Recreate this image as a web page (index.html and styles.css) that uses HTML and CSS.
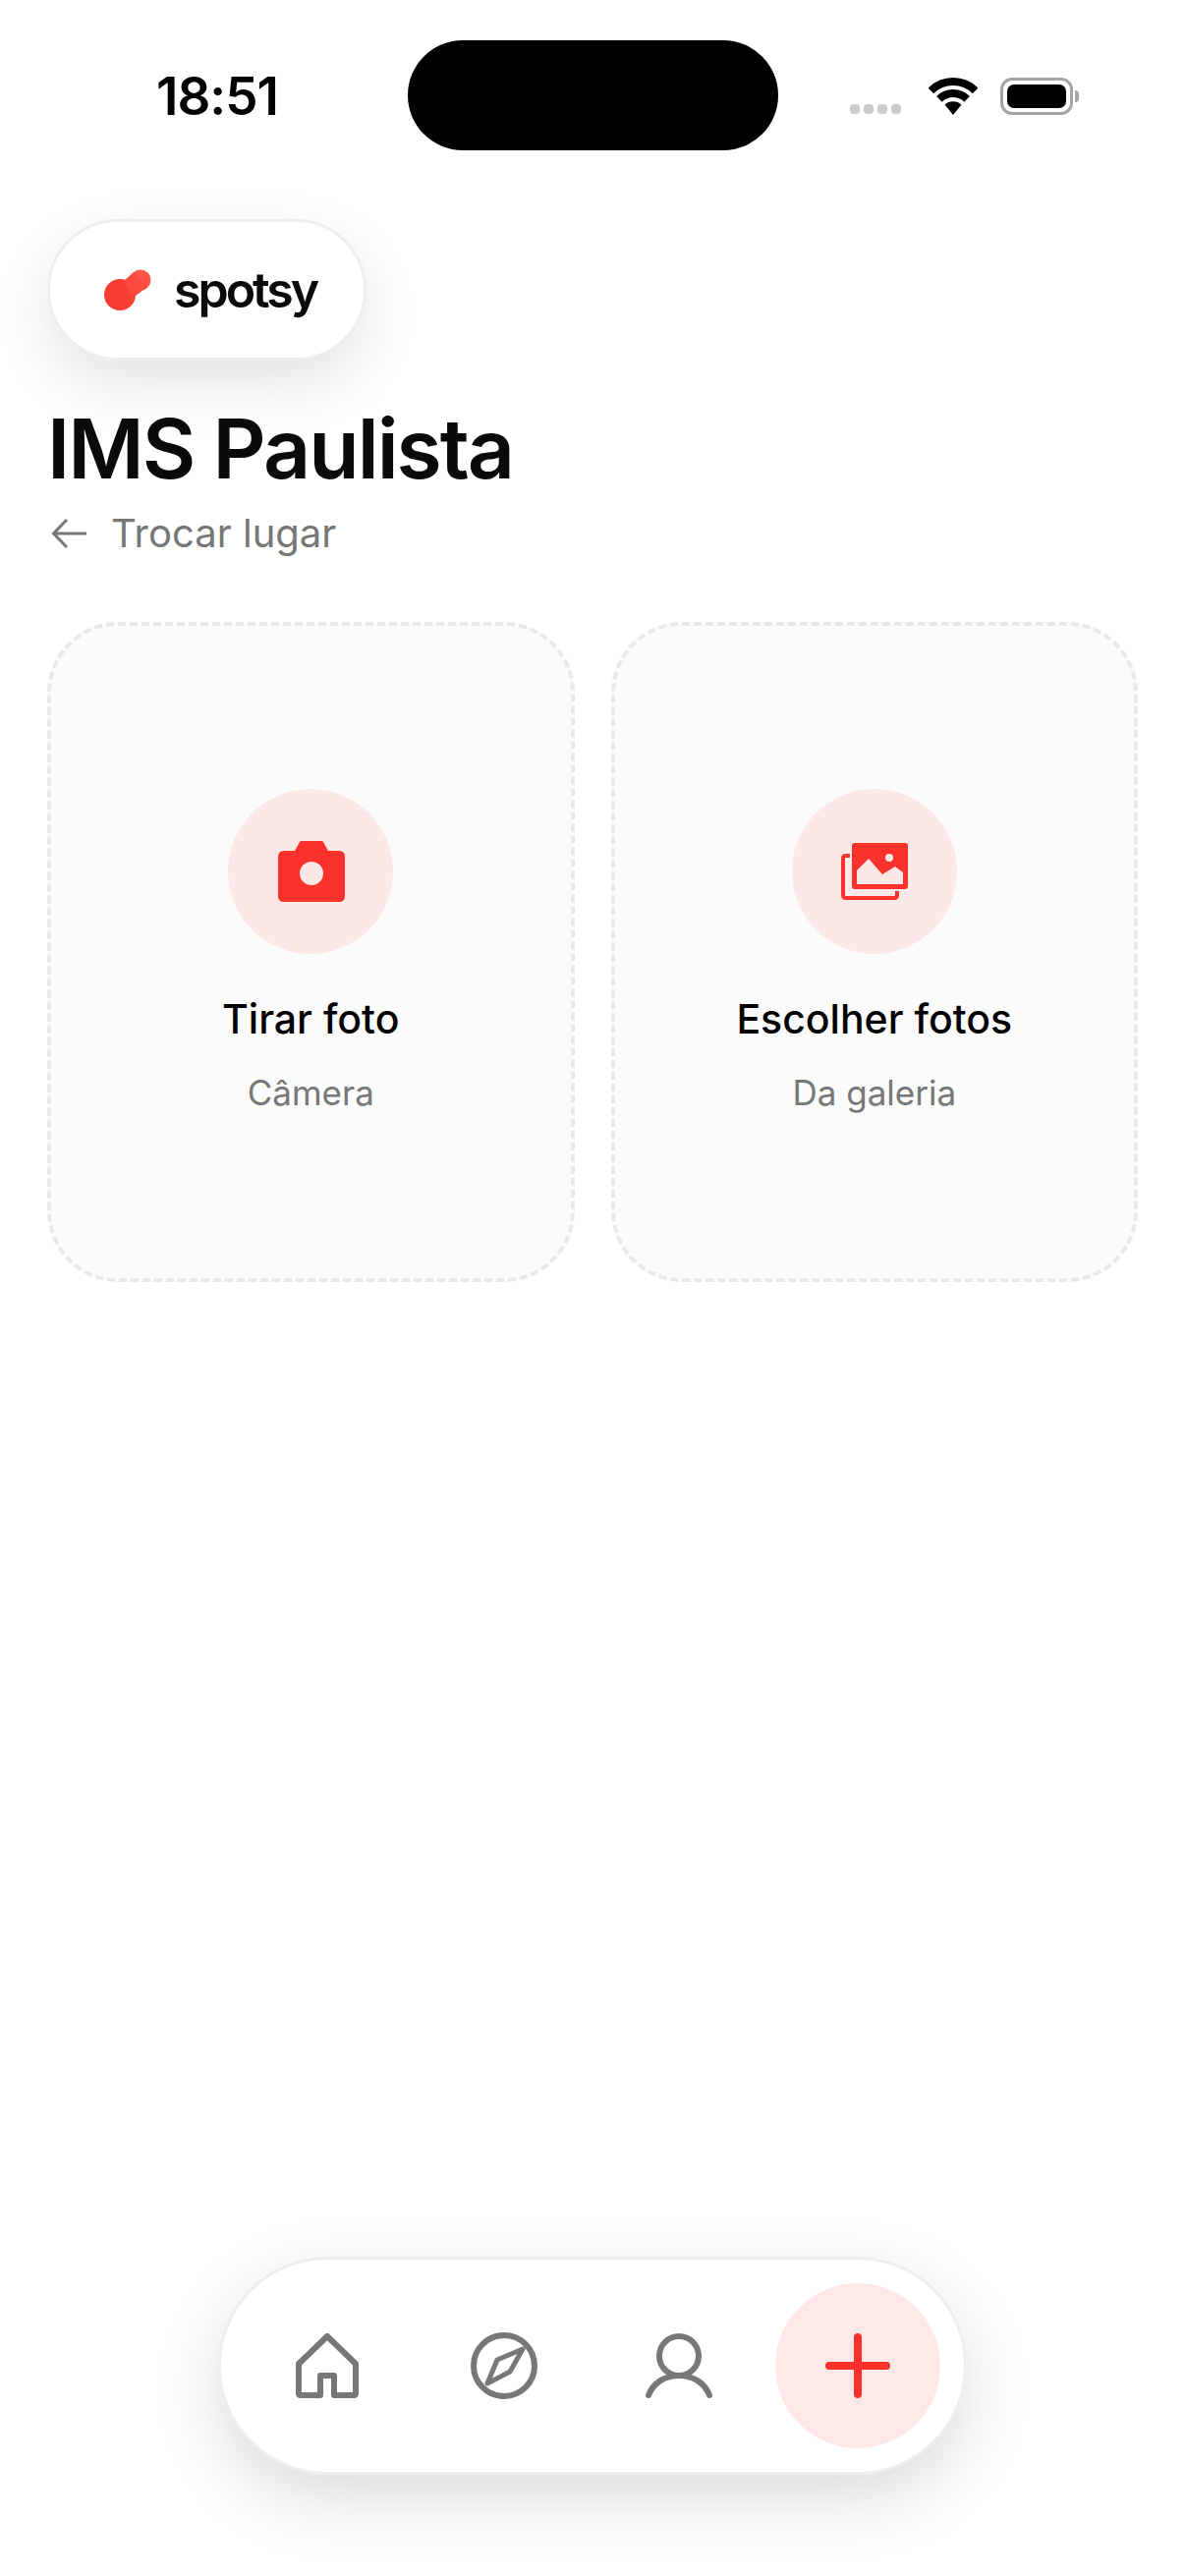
FILE: index.html
```html
<!DOCTYPE html>
<html lang="pt-BR">
<head>
    <meta charset="utf-8">
    <title>Spotsy</title>
    <link rel="stylesheet" href="styles.css">
</head>
<body>
    <div class="statusbar">
        <div class="time">18:51</div>
        <div class="island"></div>
        <div class="status-icons">
            <div class="signal"><i></i><i></i><i></i><i></i></div>
            <svg class="wifi" width="50" height="38" viewBox="0 0 50 38">
                <path d="M2.4 13.4A32 32 0 0 1 47.6 13.4" fill="none" stroke="#000" stroke-width="8"/>
                <path d="M10.9 21.9A20 20 0 0 1 39.1 21.9" fill="none" stroke="#000" stroke-width="8"/>
                <path d="M25 38L16.5 27.5A13 13 0 0 1 33.5 27.5Z" fill="#000"/>
            </svg>
            <div class="battery"><div class="battery-fill"></div></div>
            <div class="battery-nub"></div>
        </div>
    </div>

    <div class="main">
        <div class="logo-pill">
            <svg width="48" height="42" viewBox="0 0 48 42">
                <circle cx="16" cy="26" r="16" fill="#fa3c30"/>
                <circle cx="37" cy="11" r="10.5" fill="#ff5447"/>
                <path d="M20 12L30 3L44 18L28 30Z" fill="#fb4a3d"/>
            </svg>
            <span class="logo-text">spotsy</span>
        </div>

        <h1 class="place-title">IMS Paulista</h1>
        <div class="place-change">
            <svg width="38" height="32" viewBox="0 0 38 32">
                <path d="M36 16H3M16 2L2.500 16L16 30" fill="none" stroke="#777" stroke-width="3"/>
            </svg>
            <span>Trocar lugar</span>
        </div>

        <div class="cards">
            <div class="card">
                <div class="card-circle">
                    <svg class="card-icon" width="68" height="62" viewBox="0 0 68 62">
                        <path d="M6 10H17L22 1Q22.500 0 24 0H44Q45.500 0 46 1L51 10H62Q68 10 68 16V56Q68 62 62 62H6Q0 62 0 56V16Q0 10 6 10Z" fill="#fb322b"/>
                        <circle cx="34" cy="33" r="12" fill="#fde8e7"/>
                    </svg>
                </div>
                <div class="card-title">Tirar foto</div>
                <div class="card-sub">Câmera</div>
            </div>
            <div class="card">
                <div class="card-circle">
                    <svg width="68" height="58" viewBox="0 0 68 58">
                        <path d="M9 13H5Q2 13 2 16V53Q2 56 5 56H54Q57 56 57 53V49" fill="none" stroke="#fb322b" stroke-width="4"/>
                        <rect x="11" y="0" width="57" height="47" rx="3" fill="#fb322b"/>
                        <path d="M16 28L28 16L42 32L55 24L63 30V42H16Z" fill="#fde8e7"/>
                        <circle cx="49" cy="15" r="4" fill="#fde8e7"/>
                    </svg>
                </div>
                <div class="card-title">Escolher fotos</div>
                <div class="card-sub">Da galeria</div>
            </div>
        </div>
    </div>

    <div class="tabbar">
        <div class="tab">
            <svg width="64" height="66" viewBox="0 0 64 66">
                <path d="M25 63H5Q3 63 3 61V31L32 3L61 31V61Q61 63 59 63H39V43H25Z" fill="none" stroke="#777" stroke-width="6" stroke-linejoin="round"/>
            </svg>
        </div>
        <div class="tab">
            <svg width="68" height="68" viewBox="0 0 68 68">
                <circle cx="34" cy="34" r="31" fill="none" stroke="#777" stroke-width="6"/>
                <path d="M53 17L40 40L17 52L27 28Z" fill="none" stroke="#777" stroke-width="5" stroke-linejoin="round"/>
            </svg>
        </div>
        <div class="tab">
            <svg width="68" height="66" viewBox="0 0 68 66">
                <circle cx="34" cy="23" r="20" fill="none" stroke="#777" stroke-width="6"/>
                <path d="M3 63C8 50 20 43 34 43C48 43 60 50 65 63" fill="none" stroke="#777" stroke-width="6" stroke-linecap="round"/>
            </svg>
        </div>
        <div class="tab-add">
            <svg width="66" height="66" viewBox="0 0 66 66">
                <path d="M33 4V62M4 33H62" fill="none" stroke="#fb322b" stroke-width="8" stroke-linecap="round"/>
            </svg>
        </div>
    </div>
</body>
</html>
```

FILE: styles.css
```css
body
{
    margin: 0;
    width: 1206px;
    height: 2622px;
    display: flex;
    flex-direction: column;
    overflow: hidden;
    background-color: #fff;
    font-family: Inter, "Liberation Sans", sans-serif;
    color: #0a0a0a;
}
.statusbar
{
    display: grid;
    grid-template-columns: 415px 377px 1fr;
    grid-template-rows: 112px;
    height: 112px;
    padding-top: 41px;
}
.time
{
    padding-left: 159px;
    font-size: 53px;
    font-weight: 600;
    line-height: 115px;
    letter-spacing: -1px;
    color: #000;
}
.island
{
    background-color: #000;
    border-radius: 56px;
}
.status-icons
{
    display: flex;
    align-items: flex-end;
    height: 76px;
    padding-left: 73px;
}
.signal
{
    display: flex;
    gap: 4px;
    padding-bottom: 1px;
}
.signal i
{
    display: block;
    width: 10px;
    height: 10px;
    border-radius: 4px;
    background-color: #ccc;
}
.wifi
{
    margin-left: 28px;
}
.battery
{
    box-sizing: border-box;
    width: 74px;
    height: 38px;
    margin-left: 23px;
    padding: 4px;
    border: 3px solid #a5a5a5;
    border-radius: 12px;
}
.battery-fill
{
    height: 100%;
    background-color: #000;
    border-radius: 7px;
}
.battery-nub
{
    width: 4px;
    height: 12px;
    margin: 0 0 13px 2px;
    background-color: #a5a5a5;
    border-radius: 0 4px 4px 0;
}
.main
{
    flex: 1;
    padding: 70px 48px 0 48px;
}
.logo-pill
{
    box-sizing: border-box;
    display: flex;
    align-items: center;
    gap: 23px;
    width: 325px;
    height: 144px;
    padding-left: 55px;
    background-color: #fff;
    border: 3px solid #eee;
    border-radius: 72px;
    box-shadow: 0 24px 60px rgba(0,0,0,.11);
}
.logo-text
{
    font-size: 50px;
    font-weight: 600;
    letter-spacing: -3px;
    color: #0a0a0a;
}
.place-title
{
    margin: 40px 0 0 0;
    font-size: 84px;
    font-weight: 600;
    line-height: 100px;
    letter-spacing: -2px;
}
.place-change
{
    display: flex;
    align-items: center;
    gap: 23px;
    margin-top: 6px;
    padding-left: 4px;
    font-size: 40px;
    line-height: 60px;
    color: #777;
}
.cards
{
    display: grid;
    grid-template-columns: 1fr 1fr;
    gap: 37px;
    margin-top: 60px;
}
.card
{
    box-sizing: border-box;
    display: flex;
    flex-direction: column;
    align-items: center;
    height: 672px;
    padding-top: 166px;
    background-color: #fbfbfb;
    border: 4px dashed #e8e8e8;
    border-radius: 72px;
}
.card-circle
{
    display: flex;
    align-items: center;
    justify-content: center;
    width: 168px;
    height: 168px;
    border-radius: 50%;
    background-color: #fce8e7;
}
.card-icon
{
    margin-left: 2px;
}
.card-title
{
    margin-top: 38px;
    font-size: 41px;
    font-weight: 500;
    line-height: 56px;
    color: #000;
}
.card-sub
{
    margin-top: 22px;
    font-size: 35px;
    line-height: 50px;
    color: #777;
}
.tabbar
{
    box-sizing: border-box;
    display: flex;
    align-items: center;
    align-self: center;
    flex-shrink: 0;
    width: 762px;
    height: 222px;
    margin-bottom: 103px;
    padding-left: 76px;
    background-color: #fff;
    border: 3px solid #eee;
    border-radius: 111px;
    box-shadow: 0 24px 70px rgba(0,0,0,.14);
}
.tab
{
    width: 178px;
    display: flex;
    justify-content: flex-start;
}
.tab-add
{
    display: flex;
    align-items: center;
    justify-content: center;
    width: 168px;
    height: 168px;
    margin-left: -46px;
    border-radius: 50%;
    background-color: #fee9e8;
}
```
